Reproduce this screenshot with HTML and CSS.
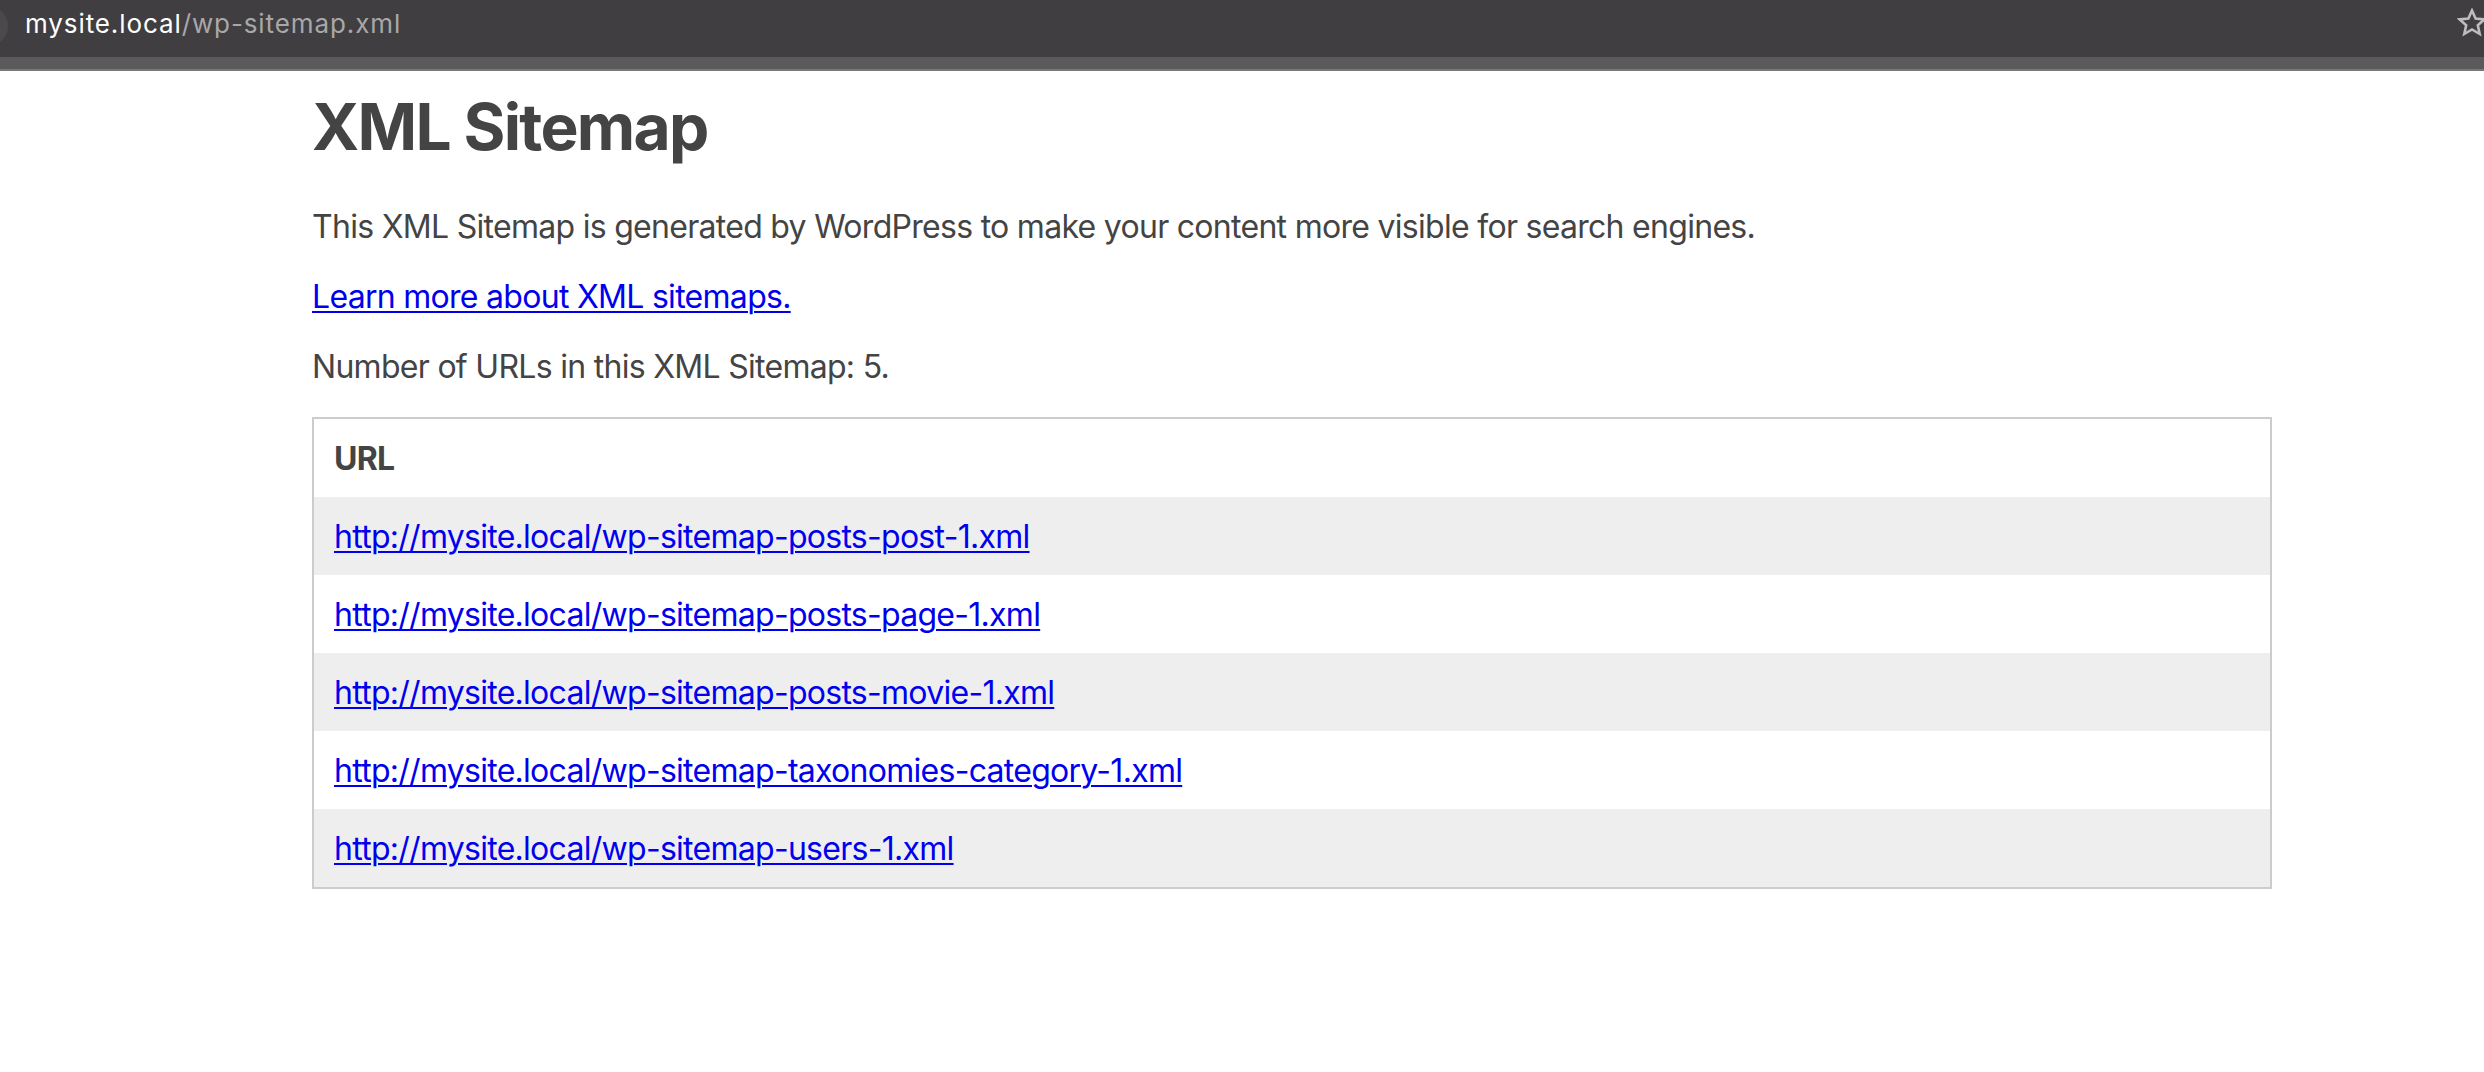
FILE: index.html
```html
<!DOCTYPE html>
<html lang="en">
<head>
<meta charset="utf-8">
<title>XML Sitemap</title>
<link rel="stylesheet" href="styles.css">
</head>
<body>
<header class="browser">
  <div class="topbar">
    <span class="circle"></span>
    <span class="address"><span class="host">mysite.local</span><span class="path">/wp-sitemap.xml</span></span>
    <svg class="star" viewBox="0 0 30 30" width="30" height="30" aria-hidden="true">
      <polygon points="15,2.5 18.6,10.6 27.4,11.4 20.8,17.3 22.7,26 15,21.5 7.3,26 9.2,17.3 2.6,11.4 11.4,10.6" fill="none" stroke="#bdbdbd" stroke-width="2.6" stroke-linejoin="miter"/>
    </svg>
  </div>
  <div class="tabstrip"></div>
  <div class="edge"></div>
</header>
<main class="sitemap">
  <h1 class="title">XML Sitemap</h1>
  <p class="text">This XML Sitemap is generated by WordPress to make your content more visible for search engines.</p>
  <p class="text"><a class="link" href="#">Learn more about XML sitemaps.</a></p>
  <p class="text">Number of URLs in this XML Sitemap: 5.</p>
  <table class="urls">
    <thead>
      <tr><th class="cell head">URL</th></tr>
    </thead>
    <tbody>
      <tr class="odd"><td class="cell"><a class="link" href="#">http://mysite.local/wp-sitemap-posts-post-1.xml</a></td></tr>
      <tr><td class="cell"><a class="link" href="#">http://mysite.local/wp-sitemap-posts-page-1.xml</a></td></tr>
      <tr class="odd"><td class="cell"><a class="link" href="#">http://mysite.local/wp-sitemap-posts-movie-1.xml</a></td></tr>
      <tr><td class="cell"><a class="link" href="#">http://mysite.local/wp-sitemap-taxonomies-category-1.xml</a></td></tr>
      <tr class="odd"><td class="cell"><a class="link" href="#">http://mysite.local/wp-sitemap-users-1.xml</a></td></tr>
    </tbody>
  </table>
</main>
</body>
</html>
```
FILE: styles.css
```css
html, body {
  margin: 0;
  padding: 0;
  background: #ffffff;
}
body {
  font-family: Inter, "Noto Sans", "Liberation Sans", sans-serif;
  color: #444444;
  overflow: hidden;
}
.browser {
  display: block;
}
.topbar {
  height: 57px;
  background: #403e41;
  display: flex;
  align-items: center;
  overflow: hidden;
}
.circle {
  flex: none;
  width: 40px;
  height: 40px;
  border-radius: 50%;
  background: #4b494c;
  margin-left: -32px;
  margin-top: -6px;
}
.address {
  margin-left: 17px;
  margin-top: -10px;
  font-size: 26px;
  letter-spacing: 0.9px;
  white-space: nowrap;
}
.host {
  color: #ffffff;
}
.path {
  color: #a8a7a9;
}
.star {
  flex: none;
  margin-left: auto;
  margin-right: -3px;
  margin-top: -11px;
}
.tabstrip {
  height: 12px;
  background: #5a5a5a;
}
.edge {
  height: 2px;
  background: #787878;
}
.sitemap {
  width: 1960px;
  margin-left: 312px;
}
.title {
  font-size: 64px;
  font-weight: 700;
  line-height: 76px;
  margin: 18px 0 0 0;
  letter-spacing: -1.7px;
}
.text {
  font-size: 32px;
  line-height: 38px;
  margin: 32px 0 0 0;
  letter-spacing: -0.71px;
}
.title + .text {
  margin-top: 43px;
}
.link {
  color: #0000ee;
  text-decoration: underline;
  text-decoration-thickness: 2px;
  text-underline-offset: 3px;
}
.urls {
  margin-top: 31px;
  width: 100%;
  border: 2px solid #cccccc;
  border-collapse: separate;
  border-spacing: 0;
}
.cell {
  text-align: left;
  font-size: 32px;
  line-height: 38px;
  padding: 21px 20px 19px 20px;
  letter-spacing: -0.72px;
}
.head {
  font-weight: 700;
}
.odd .cell {
  background: #eeeeee;
}
```
